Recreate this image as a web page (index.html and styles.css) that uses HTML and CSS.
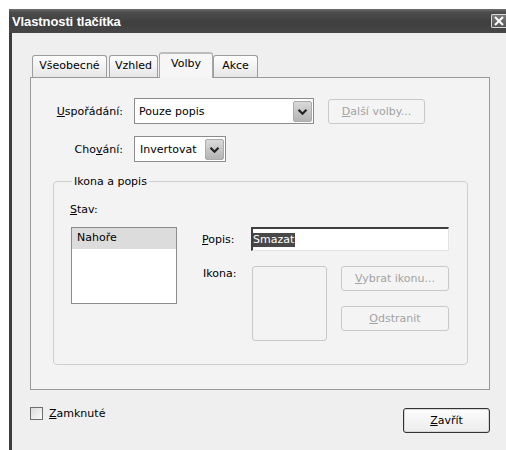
FILE: index.html
```html
<!DOCTYPE html>
<html lang="cs">
<head>
<meta charset="utf-8">
<title>Vlastnosti tlačítka</title>
<link rel="stylesheet" href="styles.css">
</head>
<body>
<div class="window">
  <div class="titlebar">
    <span class="title">Vlastnosti tlačítka</span>
    <span class="close">
      <svg width="15" height="14" viewBox="0 0 15 14"><path d="M4 3.5 L11 10.5 M11 3.5 L4 10.5" stroke="#fff" stroke-width="2.2" stroke-linecap="square"/></svg>
    </span>
  </div>
  <div class="content">
    <div class="tabs">
      <div class="tab tab-general">Všeobecné</div>
      <div class="tab tab-look">Vzhled</div>
      <div class="tab tab-options active">Volby</div>
      <div class="tab tab-actions">Akce</div>
    </div>
    <div class="panel">
      <div class="row">
        <span class="lbl"><u>U</u>spořádání:</span>
        <div class="combo combo-wide">
          <span class="combo-text">Pouze popis</span>
          <span class="drop"><svg width="11" height="8" viewBox="0 0 11 8"><path d="M1.5 1.8 L5.5 5.8 L9.5 1.8" fill="none" stroke="#222" stroke-width="2.2"/></svg></span>
        </div>
        <button class="btn disabled btn-more"><u>D</u>alší volby...</button>
      </div>
      <div class="row row-second">
        <span class="lbl">Cho<u>v</u>ání:</span>
        <div class="combo combo-narrow">
          <span class="combo-text">Invertovat</span>
          <span class="drop"><svg width="11" height="8" viewBox="0 0 11 8"><path d="M1.5 1.8 L5.5 5.8 L9.5 1.8" fill="none" stroke="#222" stroke-width="2.2"/></svg></span>
        </div>
      </div>
      <fieldset class="group">
        <legend>Ikona a popis</legend>
        <div class="state-label"><u>S</u>tav:</div>
        <div class="group-body">
          <div class="listbox">
            <div class="item selected">Nahoře</div>
          </div>
          <div class="props">
            <div class="prop-row">
              <span class="plabel"><u>P</u>opis:</span>
              <div class="field"><span class="sel-text">Smazat</span></div>
            </div>
            <div class="prop-row icon-row">
              <span class="plabel icon-label">Ikona:</span>
              <div class="preview"></div>
              <div class="icon-btns">
                <button class="btn disabled btn-icon"><u>V</u>ybrat ikonu...</button>
                <button class="btn disabled btn-icon"><u>O</u>dstranit</button>
              </div>
            </div>
          </div>
        </div>
      </fieldset>
    </div>
    <div class="footer">
      <label class="check">
        <span class="box"></span>
        <span><u>Z</u>amknuté</span>
      </label>
      <button class="btn btn-close"><u>Z</u>avřít</button>
    </div>
  </div>
</div>
</body>
</html>
```
FILE: styles.css
```css
html, body {
  margin: 0;
  padding: 0;
  background: #fff;
  overflow: hidden;
}

body {
  font-family: "DejaVu Sans", sans-serif;
  font-size: 11px;
  color: #000;
}

u {
  text-decoration: underline;
  text-underline-offset: 1px;
}

.window {
  margin: 9px 0 0 9px;
  width: 497px;
  height: 441px;
  display: flex;
  flex-direction: column;
}

/* title bar */
.titlebar {
  height: 24px;
  flex: none;
  display: flex;
  align-items: center;
  justify-content: space-between;
  background: linear-gradient(#707070 0, #4d4d4d 3px, #3f3f3f 55%, #464646 100%);
}

.title {
  font-family: "Liberation Sans", Arial, sans-serif;
  font-weight: bold;
  font-size: 13px;
  color: #fff;
  padding-left: 3px;
  letter-spacing: -0.1px;
}

.close {
  width: 15px;
  height: 14px;
  box-sizing: border-box;
  border: 1px solid #d8d8d8;
  border-right: none;
  border-radius: 2px 0 0 2px;
  background: linear-gradient(#7a7a7a, #555);
  display: flex;
  align-items: center;
  justify-content: center;
}

.close svg {
  display: block;
}

/* dialog body */
.content {
  flex: 1;
  background: #efefef;
  border-left: 3px solid #3d3d3d;
  padding: 0 16px 0 18px;
}

/* tabs */
.tabs {
  display: flex;
  align-items: flex-end;
  height: 25px;
  margin-top: 19px;
  padding-left: 2px;
  position: relative;
  z-index: 1;
}

.tab {
  box-sizing: border-box;
  height: 22px;
  line-height: 20px;
  text-align: center;
  border: 1px solid #9d9d9d;
  border-bottom: none;
  border-radius: 3px 3px 0 0;
  background: linear-gradient(#fefefe, #e6e6e6);
}

.tab-general { width: 75px; margin-right: 2px; }
.tab-look { width: 49px; margin-right: 1px; }
.tab-options { width: 54px; }
.tab-actions { width: 45px; }

.tab.active {
  height: 26px;
  margin-bottom: -1px;
  line-height: 20px;
  background: #f6f6f6;
  border-color: #a8a8a8;
  border-top: 2px solid #bcbcbc;
}

/* page of the tab control */
.panel {
  box-sizing: border-box;
  height: 313px;
  border: 1px solid #9a9a9a;
  background: #f3f3f3;
  padding-top: 20px;
}

.row {
  display: flex;
  align-items: center;
  height: 26px;
}

.row-second {
  margin-top: 12px;
}

.lbl {
  width: 92px;
  text-align: right;
  margin-right: 11px;
}

.combo {
  box-sizing: border-box;
  height: 26px;
  border: 1px solid #8c8c8c;
  background: #fff;
  display: flex;
  align-items: center;
  justify-content: space-between;
  padding: 2px 1px 2px 4px;
}

.combo-wide { width: 180px; }
.combo-narrow { width: 92px; padding-left: 5px; }

.drop {
  box-sizing: border-box;
  width: 19px;
  height: 21px;
  align-self: flex-start;
  border: 1px solid #ababab;
  border-radius: 2px;
  background: linear-gradient(#d9d9d9, #b4b4b4);
  display: flex;
  align-items: center;
  justify-content: center;
}

.drop svg {
  display: block;
}

.btn {
  font-family: "DejaVu Sans", sans-serif;
  font-size: 11px;
  box-sizing: border-box;
  height: 25px;
  padding: 0;
  border-radius: 3px;
  background: linear-gradient(#fdfdfd, #ececec);
  border: 1px solid #3b3b3b;
  color: #000;
}

.btn.disabled {
  border-color: #c9c9c9;
  background: #f4f4f4;
  color: #a3a3a3;
}

.btn-more {
  width: 97px;
  margin-left: 14px;
}

/* group box */
.group {
  margin: 13px 21px 0 22px;
  padding: 15px 0 23px 16px;
  border: 1px solid #cfcfcf;
  border-radius: 4px;
}

.group legend {
  padding: 0 2px;
  margin-left: 2px;
  line-height: 13px;
}

.state-label {
  line-height: 13px;
}

.group-body {
  display: flex;
  align-items: flex-start;
  margin-top: 11px;
}

.listbox {
  box-sizing: border-box;
  width: 106px;
  height: 77px;
  margin-left: 1px;
  border: 1px solid #8c8c8c;
  background: #fff;
  padding: 0;
}

.item {
  height: 21px;
  line-height: 20px;
  padding-left: 5px;
}

.item.selected {
  background: #dcdcdc;
}

.props {
  margin-left: 25px;
}

.prop-row {
  display: flex;
  align-items: center;
}

.plabel {
  width: 49px;
}

.field {
  box-sizing: border-box;
  width: 198px;
  height: 24px;
  background: #fff;
  border-top: 2px solid #3f3f3f;
  border-left: 2px solid #3f3f3f;
  border-right: 1px solid #e2e2e2;
  border-bottom: 1px solid #e2e2e2;
  display: flex;
  align-items: center;
  padding-left: 0;
}

.sel-text {
  background: #484848;
  color: #fff;
  line-height: 14px;
  padding: 0 1px 0 0;
}

.icon-row {
  align-items: flex-start;
  margin-top: 15px;
}

.icon-label {
  width: 50px;
  padding-left: 1px;
  padding-top: 1px;
  box-sizing: border-box;
}

.preview {
  box-sizing: border-box;
  width: 75px;
  height: 75px;
  border: 1px solid #c8c8c8;
  border-radius: 3px;
}

.icon-btns {
  display: flex;
  flex-direction: column;
  gap: 15px;
  margin-left: 14px;
}

.btn-icon {
  width: 108px;
}

/* bottom of the dialog */
.footer {
  display: flex;
  justify-content: space-between;
  align-items: flex-start;
  margin-top: 17px;
}

.check {
  display: flex;
  align-items: center;
  gap: 6px;
  line-height: 13px;
}

.box {
  box-sizing: border-box;
  width: 13px;
  height: 13px;
  border: 1px solid #6e6e6e;
  background: linear-gradient(135deg, #dadada, #fbfbfb);
}

.btn-close {
  width: 87px;
  margin-top: 1px;
  border-color: #333;
  box-shadow: inset 0 0 0 1px #d6d6d6;
}
```
